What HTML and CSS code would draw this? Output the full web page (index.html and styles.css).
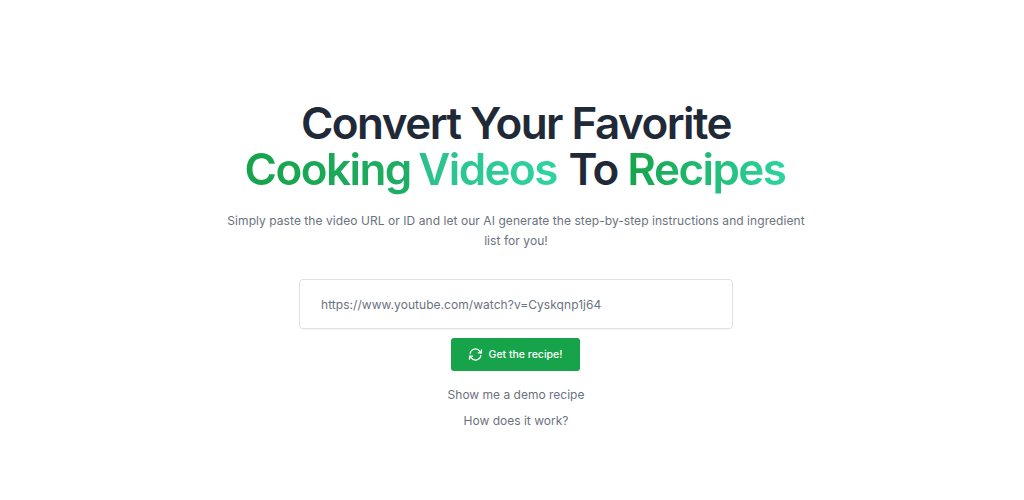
FILE: index.html
```html
<!DOCTYPE html>
<html lang="en">
<head>
<meta charset="utf-8">
<title>Recipes</title>
<link rel="stylesheet" href="styles.css">
</head>
<body>
<main class="hero">
  <h1 class="title">Convert Your Favorite<br><span class="line-two"><span class="grad-a">Cooking</span> <span class="grad-b">Videos</span> To <span class="grad-c">Recipes</span></span></h1>
  <p class="lead">Simply paste the video URL or ID and let our AI generate the step-by-step instructions and ingredient list for you!</p>
  <input class="url" type="text" placeholder="https://www.youtube.com/watch?v=Cyskqnp1j64">
  <button class="go" type="button">
    <svg class="go-icon" viewBox="0 0 24 24" fill="none" stroke="currentColor" stroke-width="2" stroke-linecap="round" stroke-linejoin="round"><path d="M3.5 10.5A8.5 8.5 0 0 1 19 7l2 2.5"/><path d="M21.5 4.5v5h-5"/><path d="M20.5 13.5A8.5 8.5 0 0 1 5 17l-2-2.5"/><path d="M2.5 19.5v-5h5"/></svg>
    Get the recipe!
  </button>
  <a class="link first">Show me a demo recipe</a>
  <a class="link">How does it work?</a>
</main>
</body>
</html>
```
FILE: styles.css
```css
* { box-sizing: border-box; }
html, body { margin: 0; height: 100%; background: #fff; }
body { font-family: Inter, "Liberation Sans", sans-serif; }
.hero { display: flex; flex-direction: column; align-items: center; padding: 100px 0 0 8px; }
.title { margin: 0; font-size: 44px; line-height: 46px; font-weight: 600; letter-spacing: -1.55px; color: #1f2937; text-align: center; }
.line-two { margin-right: 2px; }
.grad-a, .grad-b, .grad-c { background-clip: text; -webkit-background-clip: text; color: transparent; }
.grad-a { background-image: linear-gradient(90deg, #16a34a, #1fae66); }
.grad-b { background-image: linear-gradient(90deg, #2cc08b, #2dd4a0); margin: 0 2px 0 -2px; }
.grad-c { background-image: linear-gradient(90deg, #16a34a, #2dd4a0); }
.lead { margin: 19px 0 0; width: 585px; font-size: 12px; line-height: 20px; color: #6b7280; text-align: center; letter-spacing: 0.06px; }
.url { margin-top: 28px; width: 434px; height: 50px; padding: 0 21px; border: 1px solid #e0e2e6; border-radius: 4px; font: 400 12px Inter, sans-serif; letter-spacing: 0.05px; color: #374151; outline: none; box-shadow: 0 1px 2px rgba(0,0,0,.05); }
.url::placeholder { color: #6b7280; opacity: 1; }
.go { margin: 9px 2px 0 0; width: 129px; height: 33px; display: flex; align-items: center; justify-content: center; gap: 6px; border: 0; border-radius: 3px; background: #16a34a; color: #fff; font: 500 10.5px Inter, sans-serif; }
.go-icon { width: 15px; height: 15px; }
.link { font-size: 12px; line-height: 20px; color: #6b7280; margin-top: 6px; }
.link.first { margin-top: 14px; }
```
